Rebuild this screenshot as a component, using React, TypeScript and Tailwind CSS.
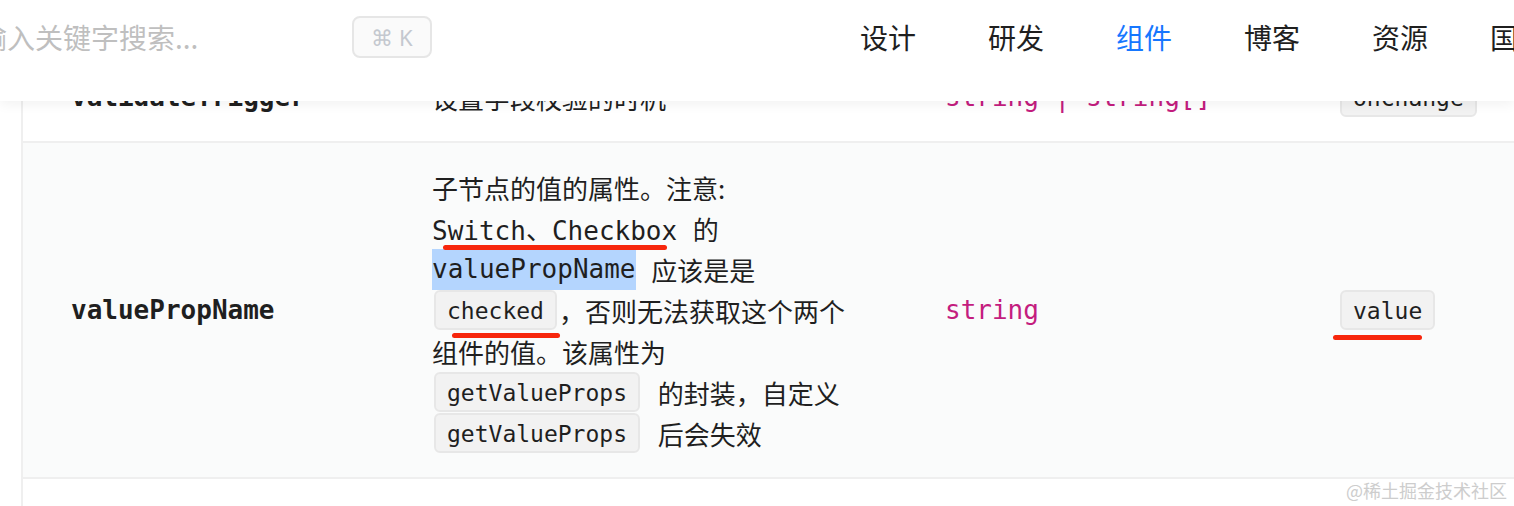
import type { ReactNode } from 'react';

const mono = "font-['DejaVu_Sans_Mono','Noto_Sans_CJK_SC',monospace]";
const sans = "font-['Noto_Sans_CJK_SC','Noto_Sans',sans-serif]";

function Code({ children }: { children: ReactNode }) {
  return (
    <span
      className={`${mono} mx-[2px] inline-block h-[40px] rounded-[6px] border-2 border-[#e7e7e7] bg-[#f2f2f2] px-[11px] align-top text-[23px] leading-[39px] text-[#1f1f1f]`}
    >
      {children}
    </span>
  );
}

function Line({ children }: { children: ReactNode }) {
  return <div className="h-[41px] whitespace-nowrap leading-[41px]">{children}</div>;
}

function Row({
  name,
  desc,
  type,
  def,
  shaded,
}: {
  name: string;
  desc: ReactNode;
  type: string;
  def: string;
  shaded?: boolean;
}) {
  return (
    <div
      className={`grid grid-cols-[361px_513px_395px_1fr] items-center border-b-2 border-[#efefef] pt-6 pb-[23px] ${
        shaded ? 'bg-[#fafbfb]' : 'bg-white'
      }`}
    >
      <div className={`${mono} pl-12 text-[26px] font-bold leading-[41px] text-[#1f1f1f]`}>{name}</div>
      <div className="pl-12">{desc}</div>
      <div className={`${mono} pl-12 text-[26px] leading-[41px] whitespace-nowrap text-[#c41d7f]`}>{type}</div>
      <div className="pl-12 h-[41px]">
        <span className="-ml-[2px] inline-block">
          <Code>{def}</Code>
        </span>
      </div>
    </div>
  );
}

export default function App() {
  return (
    <div className={`${sans} relative h-[506px] w-[1514px] overflow-hidden bg-white text-[26px] text-[#1f1f1f]`}>
      {/* table */}
      <div className="ml-[21px] mt-[53px] min-h-[460px] border-l-2 border-[#efefef]">
        <Row
          name="validateTrigger"
          desc={<Line>设置字段校验的时机</Line>}
          type="string | string[]"
          def="onChange"
        />
        <Row
          shaded
          name="valuePropName"
          type="string"
          def="value"
          desc={
            <div className="text-[26px]">
              <Line>子节点的值的属性。注意:</Line>
              <Line>
                <span className={`${mono} text-[26px]`}>Switch、Checkbox </span>的
              </Line>
              <Line>
                <span className={`${mono} inline-block h-[41px] bg-[#b4d5fe] align-top text-[26px]`}>valuePropName</span>
                <span className={mono}> </span>应该是是
              </Line>
              <Line>
                <Code>checked</Code>，否则无法获取这个两个
              </Line>
              <Line>组件的值。该属性为</Line>
              <Line>
                <Code>getValueProps</Code>
                <span className={mono}> </span>的封装，自定义
              </Line>
              <Line>
                <Code>getValueProps</Code>
                <span className={mono}> </span>后会失效
              </Line>
            </div>
          }
        />
      </div>

      {/* red annotation strokes */}
      <div className="absolute left-[443px] top-[245px] h-[5px] w-[224px] rounded-full bg-[#f7260c]" />
      <div className="absolute left-[452px] top-[333px] h-[5px] w-[108px] rounded-full bg-[#f7260c]" />
      <div className="absolute left-[1333px] top-[335px] h-[5px] w-[89px] rounded-full bg-[#f7260c]" />

      {/* fixed header */}
      <header className="absolute inset-x-0 top-0 h-[101px] overflow-hidden bg-white shadow-[0_3px_12px_rgba(0,0,0,0.06)]">
        <div className="flex h-[74px] items-center whitespace-nowrap">
          <span className="-ml-[21px] w-[373px] shrink-0 text-[28px] text-[#bfbfbf]">输入关键字搜索...</span>
          <span className="flex h-[42px] w-[80px] shrink-0 items-center justify-center rounded-[8px] border-2 border-[#e6e6e6] bg-[#fafafa] font-['Noto_Sans',sans-serif] text-[22px] text-[#c4c8cf]">
            ⌘ K
          </span>
          <nav className="ml-[428px] flex shrink-0 gap-[72px] text-[28px] text-[#1f1f1f]">
            <span>设计</span>
            <span>研发</span>
            <span className="text-[#1677ff]">组件</span>
            <span>博客</span>
            <span>资源</span>
            <span className="-ml-[10px]">国内镜像</span>
          </nav>
        </div>
      </header>

      {/* watermark */}
      <div className="absolute bottom-[5px] right-[7px] text-[18px] leading-[22px] text-[#cdcdcd]">@稀土掘金技术社区</div>
    </div>
  );
}
